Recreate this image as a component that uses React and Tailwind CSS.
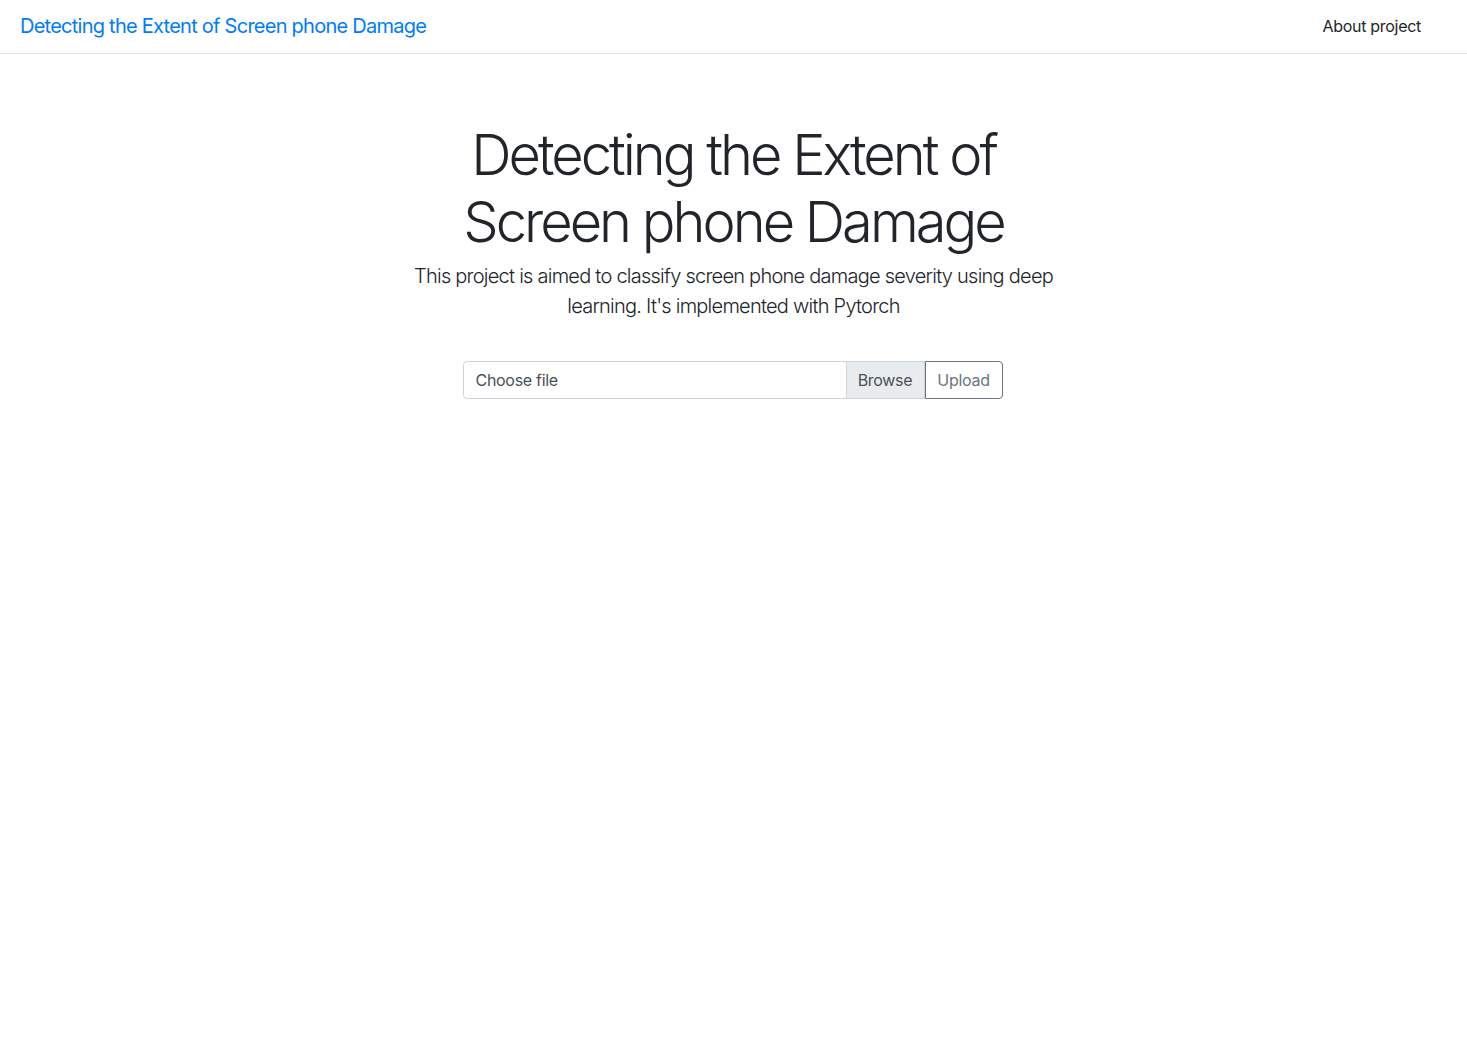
export default function App() {
  return (
    <div className="min-h-screen bg-white text-[#212529]" style={{ fontFamily: 'Inter, "Noto Sans", sans-serif' }}>
      <nav className="flex h-[54px] items-center justify-between border-b border-[#dee2e6] pl-5 pr-[46px]">
        <a className="pb-[2px] text-[20px] leading-[30px] text-[#007bff] tracking-[-0.75px]">Detecting the Extent of Screen phone Damage</a>
        <a className="pb-[2px] text-[16px] leading-6 text-[#212529] tracking-[-0.3px]">About project</a>
      </nav>
      <main className="flex flex-col items-center pt-[68px] text-center">
        <h1 className="text-[56px] font-light leading-[67px] tracking-[-3px]">
          Detecting the Extent of
          <br />
          Screen phone Damage
        </h1>
        <p className="mt-[5px] text-[20px] font-light leading-[30px] tracking-[-0.75px]">
          This project is aimed to classify screen phone damage severity using deep
          <br />
          learning. It's implemented with Pytorch
        </p>
        <div className="mt-10 mr-[2px] flex h-[38px] w-[540px] text-[16px] tracking-[-0.3px]">
          <div className="flex flex-1 items-center rounded-l-[4px] border border-[#ced4da] px-3 text-[#495057]">Choose file</div>
          <div className="flex w-[78px] items-center justify-center border border-l-0 border-[#ced4da] bg-[#e9ecef] text-[#495057]">Browse</div>
          <button className="flex w-[78px] items-center justify-center rounded-r-[4px] border border-[#6c757d] text-[#6c757d]">Upload</button>
        </div>
      </main>
    </div>
  );
}
